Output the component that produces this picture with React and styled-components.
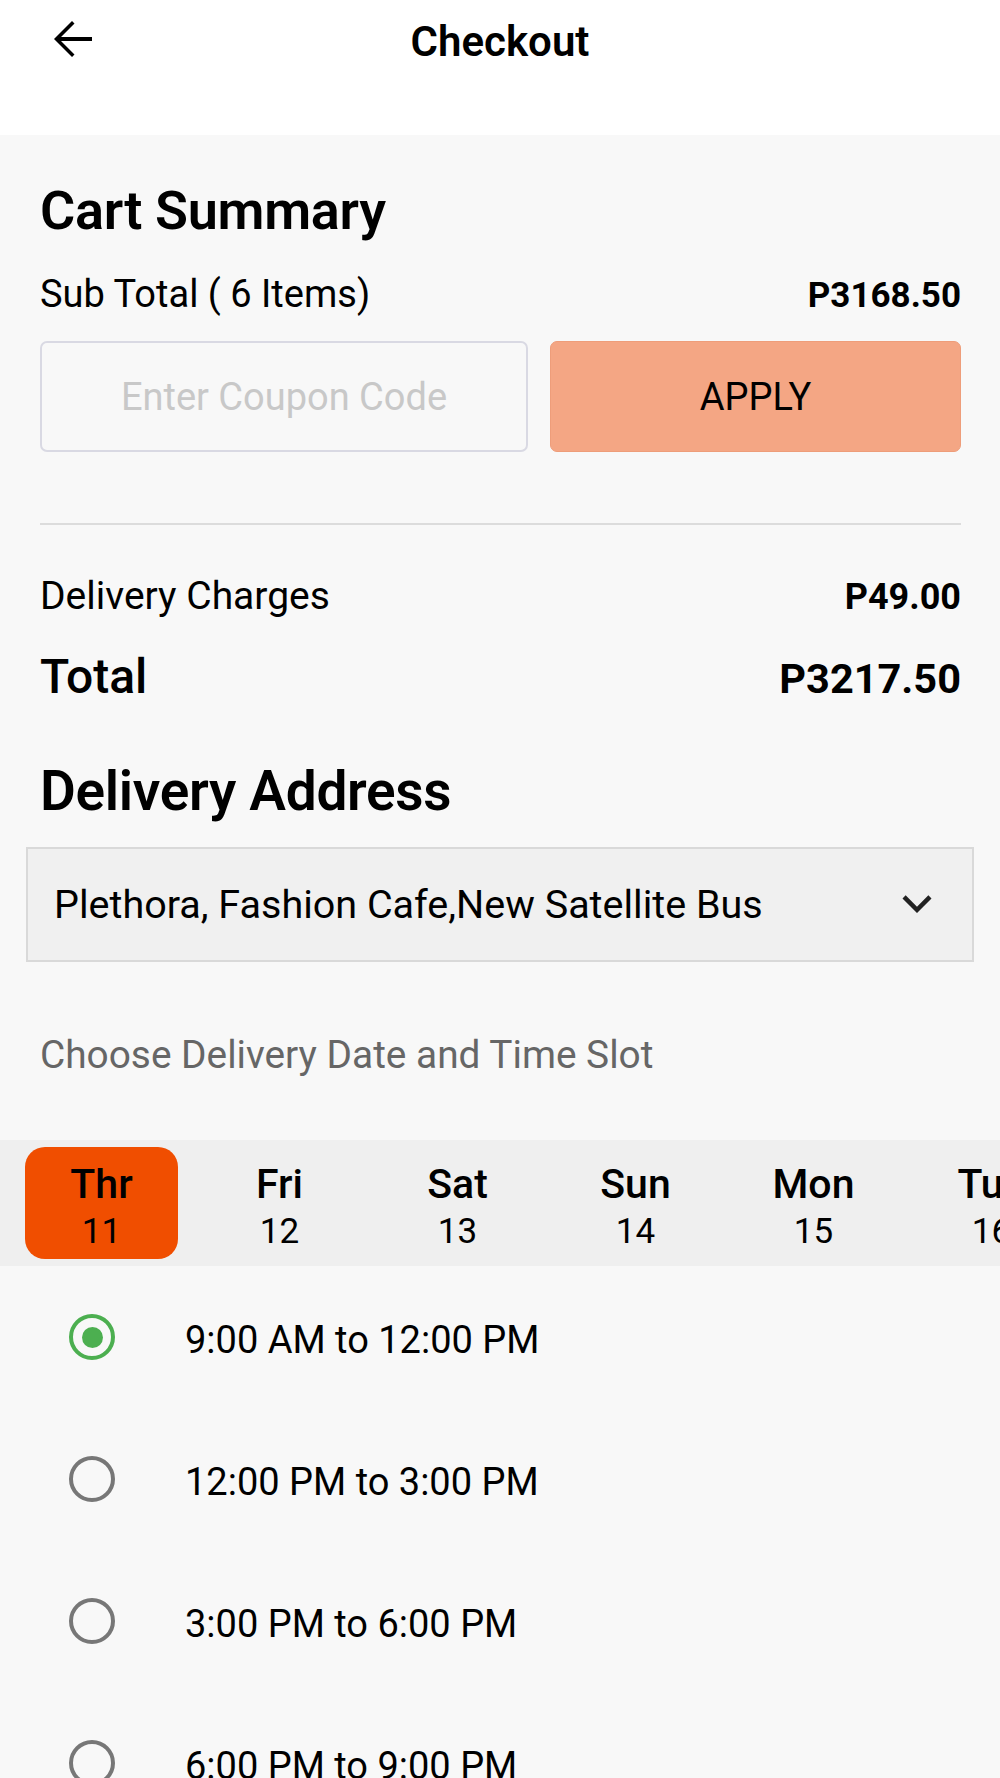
import React, { useState } from "react";
import styled, { createGlobalStyle } from "styled-components";

const GlobalStyle = createGlobalStyle`
  html, body {
    margin: 0;
    padding: 0;
    background: #f8f8f8;
    font-family: Roboto, "Noto Sans", Arial, sans-serif;
    color: #000;
  }
  * { box-sizing: border-box; }
`;

const Header = styled.header`
  height: 135px;
  background: #fff;
  display: grid;
  grid-template-columns: 1fr auto 1fr;
  align-items: start;
  padding-top: 9px;
`;

const BackButton = styled.button`
  justify-self: start;
  margin-left: 42px;
  width: 60px;
  height: 60px;
  padding: 0;
  border: none;
  background: none;
  display: block;
  svg { display: block; }
`;

const Title = styled.h1`
  margin: 8px 0 0;
  font-size: 42px;
  line-height: 1.2;
  font-weight: 600;
`;

const Content = styled.section`
  padding: 0 39px 0 40px;
`;

const SectionTitle = styled.h2`
  margin: ${p => p.$top}px 0 0;
  font-size: ${p => p.$size || 54}px;
  line-height: 1.2;
  font-weight: 600;
  letter-spacing: -0.3px;
`;

const Row = styled.div`
  display: flex;
  justify-content: space-between;
  align-items: baseline;
  margin-top: ${p => p.$top}px;
`;

const Label = styled.span`
  font-size: ${p => p.$size || 38}px;
  font-weight: ${p => p.$weight || 400};
  line-height: 1.2;
`;

const Amount = styled.span`
  font-size: ${p => p.$size || 35}px;
  font-weight: 700;
  line-height: 1.2;
`;

const CouponRow = styled.div`
  display: grid;
  grid-template-columns: 488px 1fr;
  gap: 22px;
  margin-top: 24px;
  height: 111px;
`;

const CouponInput = styled.input`
  width: 100%;
  height: 100%;
  border: 2px solid #d9d9e3;
  border-radius: 7px;
  background: #f8f8f8;
  text-align: center;
  font-family: inherit;
  font-size: 38px;
  color: #000;
  outline: none;
  &::placeholder { color: #c8c8c8; }
`;

const ApplyButton = styled.button`
  height: 100%;
  border: 1px solid #ee9d7a;
  border-radius: 7px;
  background: #f4a684;
  font-family: inherit;
  font-size: 38px;
  color: #000;
`;

const Divider = styled.hr`
  margin: 71px 0 0;
  border: none;
  height: 2px;
  background: #dcdcdc;
`;

const AddressSelect = styled.div`
  margin: 23px -13px 0 -14px;
  height: 115px;
  border: 2px solid #d9d9d9;
  background: #f0f0f0;
  display: flex;
  align-items: center;
  justify-content: space-between;
  padding: 0 26px 0 26px;
  font-size: 39.5px;
  svg { display: block; }
`;

const Hint = styled.p`
  margin: 70px 0 0;
  font-size: 38.8px;
  line-height: 1.2;
  color: #666;
`;

const DayStrip = styled.div`
  margin-top: 62px;
  height: 126px;
  background: #efefef;
  display: flex;
  padding-left: 13px;
  overflow: hidden;
`;

const DayTab = styled.div`
  flex: 0 0 178px;
  padding: 7px 13px 7px 12px;
`;

const DayBox = styled.div`
  height: 100%;
  border-radius: 20px;
  background: ${p => (p.$active ? "#f04e00" : "transparent")};
  display: flex;
  flex-direction: column;
  align-items: center;
  justify-content: center;
  gap: 4px;
  padding-top: 6px;
`;

const DayName = styled.span`
  font-size: 41px;
  font-weight: 500;
  line-height: 1.15;
`;

const DayNum = styled.span`
  font-size: 35px;
  line-height: 1.15;
`;

const SlotList = styled.div`
  display: flex;
  flex-direction: column;
`;

const Slot = styled.label`
  height: 142px;
  display: flex;
  align-items: center;
  padding-left: 69px;
`;

const Radio = styled.span`
  width: 46px;
  height: 46px;
  flex: 0 0 46px;
  border-radius: 50%;
  border: 4.5px solid ${p => (p.$checked ? "#4caf50" : "#777")};
  display: flex;
  align-items: center;
  justify-content: center;
  &::after {
    content: "";
    width: 21px;
    height: 21px;
    border-radius: 50%;
    background: #4caf50;
    display: ${p => (p.$checked ? "block" : "none")};
  }
`;

const SlotText = styled.span`
  margin: 7px 0 0 70px;
  font-size: 38px;
  line-height: 1.2;
`;

const days = [
  { name: "Thr", num: 11 },
  { name: "Fri", num: 12 },
  { name: "Sat", num: 13 },
  { name: "Sun", num: 14 },
  { name: "Mon", num: 15 },
  { name: "Tue", num: 16 },
];

const slots = [
  "9:00 AM to 12:00 PM",
  "12:00 PM to 3:00 PM",
  "3:00 PM to 6:00 PM",
  "6:00 PM to 9:00 PM",
];

export default function App() {
  const [day, setDay] = useState(0);
  const [slot, setSlot] = useState(0);

  return (
    <>
      <GlobalStyle />
      <Header>
        <BackButton aria-label="Back">
          <svg width="60" height="60" viewBox="0 0 24 24">
            <path d="M20 11.2H7.6l5.4-5.4L12 4.8 4.8 12l7.2 7.2 1-1-5.4-5.4H20z" fill="#000" />
          </svg>
        </BackButton>
        <Title>Checkout</Title>
      </Header>

      <Content>
        <SectionTitle $top={44}>Cart Summary</SectionTitle>
        <Row $top={28}>
          <Label>Sub Total ( 6 Items)</Label>
          <Amount>P3168.50</Amount>
        </Row>
        <CouponRow>
          <CouponInput placeholder="Enter Coupon Code" />
          <ApplyButton>APPLY</ApplyButton>
        </CouponRow>
        <Divider />
        <Row $top={48}>
          <Label $size={39}>Delivery Charges</Label>
          <Amount $size={36}>P49.00</Amount>
        </Row>
        <Row $top={28}>
          <Label $size={48} $weight={500}>Total</Label>
          <Amount $size={41.5}>P3217.50</Amount>
        </Row>

        <SectionTitle $top={52} $size={55}>Delivery Address</SectionTitle>
        <AddressSelect>
          <span>Plethora, Fashion Cafe,New Satellite Bus</span>
          <svg width="58" height="58" viewBox="0 0 24 24">
            <path d="M16.7 8.4L12 13.1 7.3 8.4 6 9.7l6 6 6-6z" fill="#222" />
          </svg>
        </AddressSelect>

        <Hint>Choose Delivery Date and Time Slot</Hint>
      </Content>

      <DayStrip>
        {days.map((d, i) => (
          <DayTab key={d.name} onClick={() => setDay(i)}>
            <DayBox $active={i === day}>
              <DayName>{d.name}</DayName>
              <DayNum>{d.num}</DayNum>
            </DayBox>
          </DayTab>
        ))}
      </DayStrip>

      <SlotList>
        {slots.map((s, i) => (
          <Slot key={s} onClick={() => setSlot(i)}>
            <Radio $checked={i === slot} />
            <SlotText>{s}</SlotText>
          </Slot>
        ))}
      </SlotList>
    </>
  );
}
